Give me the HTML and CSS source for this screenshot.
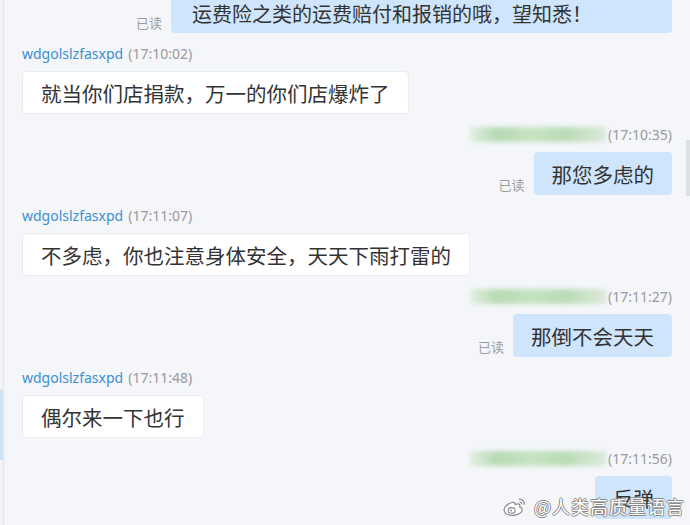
FILE: index.html
```html
<!DOCTYPE html>
<html lang="zh-CN">
<head>
  <meta charset="UTF-8" />
  <meta name="viewport" content="width=device-width, initial-scale=1.0" />
  <title>聊天记录</title>
  <link rel="stylesheet" href="styles.css">
</head>
<body>
  <div class="window">
    <div class="edge"><span class="edge-mark"></span></div>

    <div class="chat">
      <!-- top message, cut off by the screenshot -->
      <div class="msg mine first">
        <div class="row">
          <span class="read">已读</span>
          <div class="bubble wide">运费险之类的运费赔付和报销的哦，望知悉！</div>
        </div>
      </div>

      <div class="msg theirs">
        <div class="meta"><span class="nick">wdgolslzfasxpd</span><span class="time">(17:10:02)</span></div>
        <div class="bubble">就当你们店捐款，万一的你们店爆炸了</div>
      </div>

      <div class="msg mine">
        <div class="meta"><span class="blur-name"></span><span class="time">(17:10:35)</span></div>
        <div class="row">
          <span class="read">已读</span>
          <div class="bubble">那您多虑的</div>
        </div>
      </div>

      <div class="msg theirs">
        <div class="meta"><span class="nick">wdgolslzfasxpd</span><span class="time">(17:11:07)</span></div>
        <div class="bubble">不多虑，你也注意身体安全，天天下雨打雷的</div>
      </div>

      <div class="msg mine">
        <div class="meta"><span class="blur-name"></span><span class="time">(17:11:27)</span></div>
        <div class="row">
          <span class="read">已读</span>
          <div class="bubble">那倒不会天天</div>
        </div>
      </div>

      <div class="msg theirs">
        <div class="meta"><span class="nick">wdgolslzfasxpd</span><span class="time">(17:11:48)</span></div>
        <div class="bubble">偶尔来一下也行</div>
      </div>

      <div class="msg mine">
        <div class="meta"><span class="blur-name"></span><span class="time">(17:11:56)</span></div>
        <div class="row">
          <div class="bubble">反弹</div>
        </div>
      </div>
    </div>

    <div class="scroll-thumb"></div>

    <div class="watermark">
      <svg class="weibo" width="26" height="20" viewBox="0 0 26 20">
        <path d="M10 6.5c-4.2 1-8 4.4-8 7.6 0 3.2 4.1 5.2 8.6 5.2 5.6 0 9.6-2.8 9.6-5.6 0-1.6-1.4-2.4-2.6-2.8 .6-1.6 .2-3-1.8-3-1 0-2.2 .4-2.6 .6 .2-1.6-.6-2.6-3.2-2z" fill="#fff" stroke="#8a8a8a" stroke-width="1.2"/>
        <ellipse cx="9.6" cy="14.4" rx="3.6" ry="2.8" fill="#fff" stroke="#8a8a8a" stroke-width="1.1"/>
        <circle cx="9" cy="14.6" r="1" fill="#8a8a8a"/>
        <path d="M17 3.2a5 5 0 0 1 5.4 5.6" fill="none" stroke="#8a8a8a" stroke-width="1.2"/>
        <path d="M17.4 6a2.2 2.2 0 0 1 2.4 2.4" fill="none" stroke="#8a8a8a" stroke-width="1.1"/>
      </svg>
      <span class="wm-text">@人类高质量语言</span>
    </div>
  </div>
</body>
</html>
```

FILE: styles.css
```css
* {
  margin: 0;
  padding: 0;
  box-sizing: border-box;
}

body, html {
  width: 690px;
  height: 525px;
  overflow: hidden;
  background: #f4f6fa;
  font-family: "Noto Sans", "Noto Sans CJK SC", sans-serif;
}

.window {
  position: relative;
  display: flex;
  width: 690px;
  height: 525px;
  overflow: hidden;
}

.edge {
  width: 4px;
  flex: none;
  background: #f1f3f7;
  border-right: 1px solid #e2e6eb;
  padding-top: 390px;
}

.edge-mark {
  display: block;
  width: 3px;
  height: 70px;
  background: #cfe3f6;
}

.chat {
  flex: 1;
  display: flex;
  flex-direction: column;
  padding: 0 18px 0 18px;
}

.msg {
  display: flex;
  flex-direction: column;
  margin-bottom: 11px;
}

.msg.first {
  margin-top: -9px;
}

.msg.theirs {
  align-items: flex-start;
}

.msg.mine {
  align-items: flex-end;
}

.meta {
  display: flex;
  align-items: center;
  height: 18px;
  margin-bottom: 9px;
  font-size: 14px;
}

.nick {
  color: #3d8fd1;
  margin-right: 5px;
}

.time {
  color: #9a9a9a;
}

.blur-name {
  width: 136px;
  height: 15px;
  margin-right: 2px;
  background: linear-gradient(to right, #e2eee0, #b7dab3 20%, #c6e3c2 45%, #b9dcb5 70%, #dde9dc);
  filter: blur(2px);
}

.row {
  display: flex;
  align-items: flex-end;
}

.read {
  font-size: 13px;
  color: #9c9c9c;
  margin-right: 9px;
  padding-bottom: 1px;
}

.bubble {
  height: 43px;
  padding: 0 18px;
  display: flex;
  align-items: center;
  font-family: "Noto Sans CJK SC", sans-serif;
  font-size: 20.5px;
  color: #333;
  border-radius: 4px;
  white-space: nowrap;
}

.theirs .bubble {
  background: #fff;
  border: 1px solid #e9ecf0;
}

.mine .bubble {
  background: #cfe5fb;
}

.bubble.wide {
  width: 501px;
  height: 42px;
  padding-left: 21px;
  font-size: 20px;
  align-items: flex-start;
  padding-top: 8px;
}

.scroll-thumb {
  position: absolute;
  right: 0;
  top: 140px;
  width: 4px;
  height: 56px;
  background: #dcdfe4;
}

.watermark {
  position: absolute;
  right: 5px;
  bottom: 6px;
  display: flex;
  align-items: center;
  gap: 6px;
}

.wm-text {
  font-family: "Noto Sans CJK SC", sans-serif;
  font-size: 18px;
  color: #fff;
  letter-spacing: 1px;
  text-shadow: 1px 0 0 #8a8a8a, -1px 0 0 #8a8a8a, 0 1px 0 #8a8a8a, 0 -1px 0 #8a8a8a;
}
```
